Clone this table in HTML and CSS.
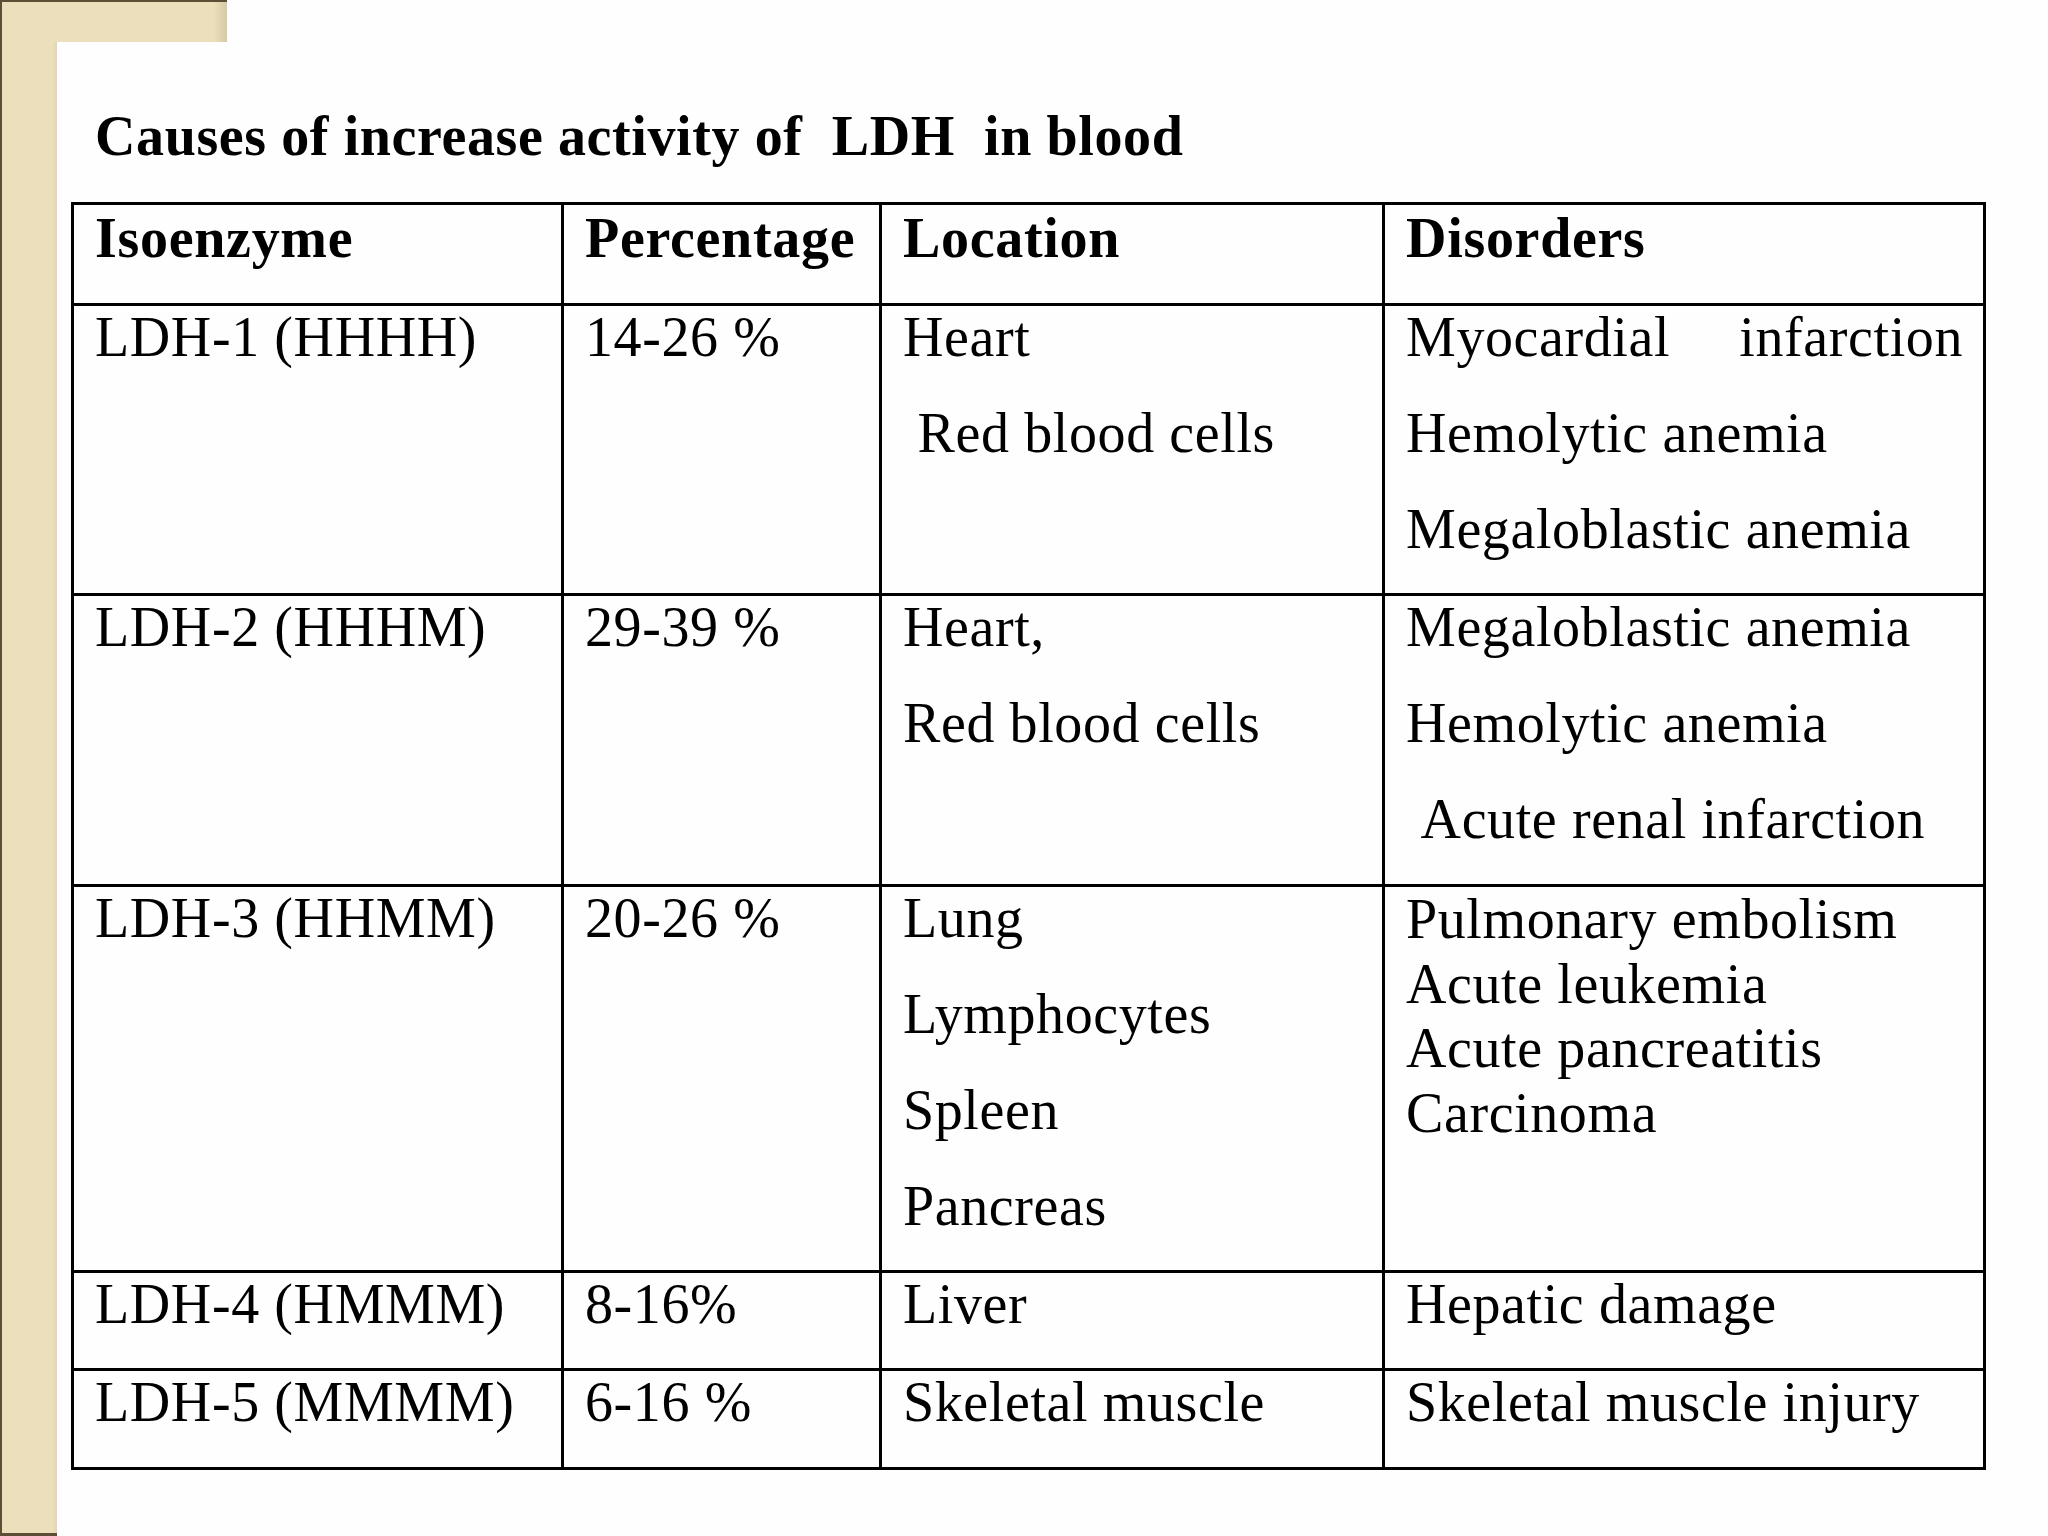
FILE: index.html
```html
<!DOCTYPE html>
<html lang="en">
<head>
<meta charset="utf-8">
<title>Causes of increase activity of LDH in blood</title>
<link rel="stylesheet" href="styles.css">
</head>
<body>
<div class="slide">
  <div class="frame-top"><div class="frame-corner"></div></div>
  <div class="slide-main">
    <div class="frame-left"></div>
    <div class="panel">
      <h1 class="title">Causes of increase activity of&nbsp; LDH&nbsp; in blood</h1>
      <div class="ldh-table">
        <div class="cell head">Isoenzyme</div>
        <div class="cell head">Percentage</div>
        <div class="cell head">Location</div>
        <div class="cell head">Disorders</div>

        <div class="cell"><p>LDH-1 (HHHH)</p></div>
        <div class="cell"><p>14-26 %</p></div>
        <div class="cell"><p>Heart</p><p>&nbsp;Red blood cells</p></div>
        <div class="cell"><p class="justify">Myocardial infarction</p><p>Hemolytic anemia</p><p>Megaloblastic anemia</p></div>

        <div class="cell"><p>LDH-2 (HHHM)</p></div>
        <div class="cell"><p>29-39 %</p></div>
        <div class="cell"><p>Heart,</p><p>Red blood cells</p></div>
        <div class="cell"><p>Megaloblastic anemia</p><p>Hemolytic anemia</p><p>&nbsp;Acute renal infarction</p></div>

        <div class="cell"><p>LDH-3 (HHMM)</p></div>
        <div class="cell"><p>20-26 %</p></div>
        <div class="cell"><p>Lung</p><p>Lymphocytes</p><p>Spleen</p><p>Pancreas</p></div>
        <div class="cell tight"><p>Pulmonary embolism</p><p>Acute leukemia</p><p>Acute pancreatitis</p><p>Carcinoma</p></div>

        <div class="cell"><p>LDH-4 (HMMM)</p></div>
        <div class="cell"><p>8-16%</p></div>
        <div class="cell"><p>Liver</p></div>
        <div class="cell"><p>Hepatic damage</p></div>

        <div class="cell"><p>LDH-5 (MMMM)</p></div>
        <div class="cell"><p>6-16 %</p></div>
        <div class="cell"><p>Skeletal muscle</p></div>
        <div class="cell"><p>Skeletal muscle injury</p></div>
      </div>
    </div>
  </div>
</div>
</body>
</html>
```
FILE: styles.css
```css
html, body {
  margin: 0;
  padding: 0;
  background: #ffffff;
}

body {
  width: 2048px;
  height: 1536px;
  overflow: hidden;
  font-family: "Liberation Serif", "Times New Roman", serif;
  color: #000;
}

.slide {
  width: 2048px;
  height: 1536px;
  display: flex;
  flex-direction: column;
  background: #fefefe;
}

.frame-top {
  height: 42px;
  flex: none;
  display: flex;
}

.frame-corner {
  width: 227px;
  height: 42px;
  box-sizing: border-box;
  background: linear-gradient(to right, #ebdfbc 0, #ebdfbc 94%, #d8c9a2 100%);
  border-top: 2px solid #5e4e36;
  border-left: 2px solid #5e4e36;
}

.slide-main {
  flex: 1;
  display: flex;
  min-height: 0;
}

.frame-left {
  width: 57px;
  flex: none;
  box-sizing: border-box;
  background: linear-gradient(to right, #ebdfbc 0, #ebdfbc 92%, #e2d5b0 100%);
  border-left: 2px solid #5e4e36;
  border-bottom: 3px solid #5e4e36;
}

.panel {
  flex: 1;
  padding-left: 14px;
}

.title {
  margin: 62px 0 34px 24px;
  font-size: 56px;
  line-height: 64px;
  font-weight: bold;
  letter-spacing: 0.6px;
}

.ldh-table {
  display: grid;
  grid-template-columns: 490px 318px 503px 601px;
  grid-template-rows: 101px 290px 291px 386px 98px 99px;
  width: max-content;
  border-top: 3px solid #000;
  border-left: 3px solid #000;
}

.cell {
  box-sizing: border-box;
  border-right: 3px solid #000;
  border-bottom: 3px solid #000;
  padding: 0 20px 0 21px;
  font-size: 56px;
  line-height: 63px;
  letter-spacing: 0.6px;
  white-space: nowrap;
}

.head {
  font-weight: bold;
  padding-top: 2px;
  letter-spacing: 0.7px;
}

.cell p {
  margin: 0 0 33px;
}

.tight p {
  margin: 0;
  line-height: 64.5px;
}

.cell p.justify {
  text-align: justify;
  text-align-last: justify;
  white-space: normal;
}
```
